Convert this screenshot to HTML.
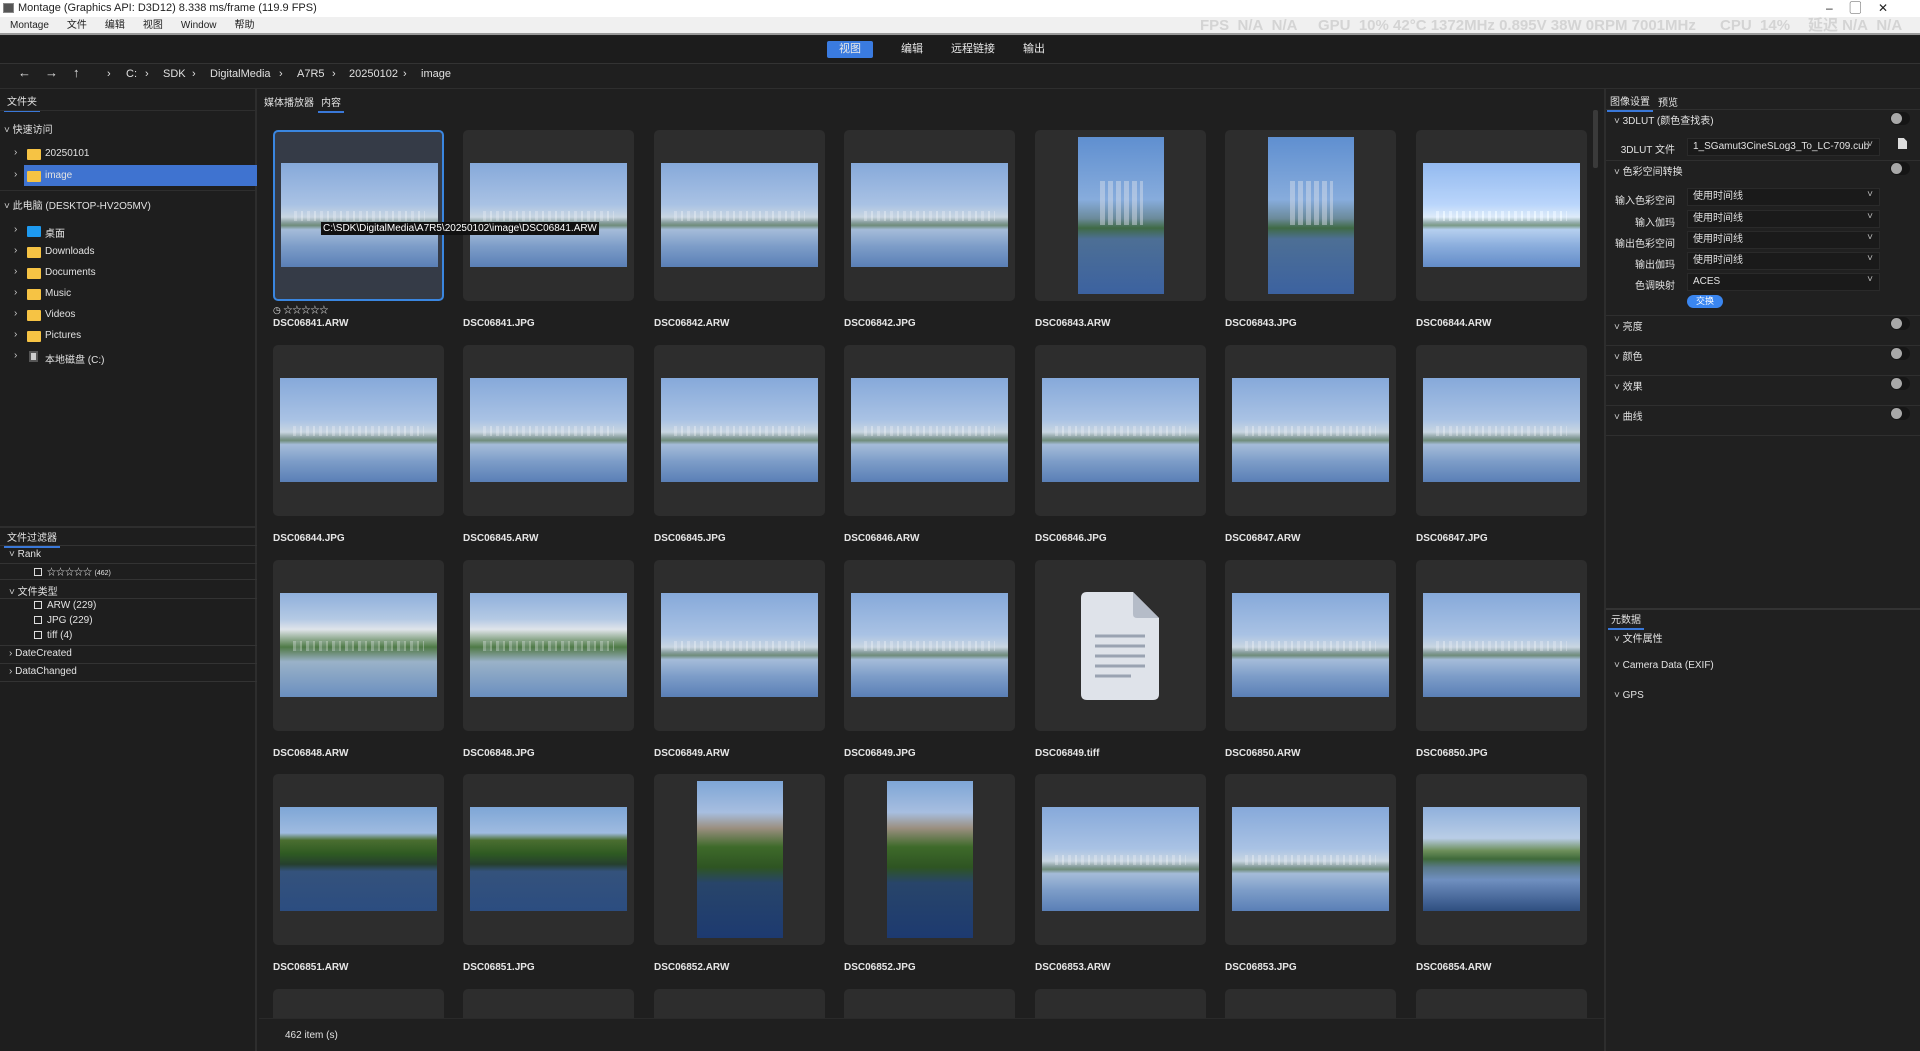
<!DOCTYPE html>
<html><head><meta charset="utf-8"><style>
*{margin:0;padding:0;box-sizing:border-box}
html,body{width:1920px;height:1051px;overflow:hidden}
body{background:#1f1f1f;font-family:"Liberation Sans","Noto Sans CJK SC",sans-serif;font-size:11px;color:#e2e2e2}
#w{position:relative;width:1920px;height:1051px;overflow:hidden}
.a{position:absolute;white-space:nowrap}
.title{left:0;top:0;width:1920px;height:17px;background:#fff;color:#222;font-size:11px;line-height:17px;padding-left:18px}
.menu{left:0;top:17px;width:1920px;height:18px;background:#f0f0f0;color:#222;font-size:10px;line-height:18px;border-bottom:2px solid #9a9a9a}
.menu span{margin-left:10px;margin-right:8px}
.gpu{position:absolute;top:0;color:#d4d4d4;font-size:15px;font-weight:bold;line-height:18px}
.top{left:0;top:36px;width:1920px;height:28px;background:#1c1c1c;border-bottom:1px solid #333}
.tab{top:41px;height:17px;line-height:17px;font-size:11px;color:#e8e8e8}
.bc{top:68px;font-size:11px;color:#e0e0e0}
.left{left:0;top:89px;width:257px;height:962px;background:#1e1e1e;border-right:2px solid #2d2d2d}
.right{left:1604px;top:89px;width:316px;height:962px;background:#202020;border-left:2px solid #2d2d2d}
.ul{border-bottom:2px solid #3a78d8}
.fold{width:14px;height:11px;background:#f6c344;border-radius:1px}
.chev{color:#ccc;font-size:10px}
.card{position:absolute;width:171px;height:171px;background:#2d2d2d;border-radius:5px}
.sel{background:#353b47;border:2px solid #3a86e0}
.im{position:absolute;left:7px;top:33px;width:157px;height:104px;background:linear-gradient(#86a9da 0%,#a9c2e4 40%,#c9d6e2 52%,#8aa0a0 57%,#6f8c7a 60%,#a5bcd9 64%,#7d9dc8 80%,#5a7fb6 100%)}
.im:after{content:"";position:absolute;left:8%;right:8%;top:46%;height:10%;background:repeating-linear-gradient(90deg,rgba(235,238,245,.35) 0 3px,rgba(200,210,225,.15) 3px 7px,rgba(255,255,255,.3) 7px 9px,transparent 9px 13px)}
.pt{left:43px;top:7px;width:86px;height:157px;background:linear-gradient(#5f8fd0 0%,#87acdc 40%,#6b8a9a 52%,#3f6a45 58%,#4d6f95 65%,#3c62a0 100%)}
.pt:after{left:25%;right:25%;top:28%;height:28%;background:repeating-linear-gradient(90deg,rgba(220,225,235,.45) 0 5px,transparent 5px 8px)}
.gr{background:linear-gradient(#7ea6d6 0%,#9fbbe0 25%,#4a6e30 32%,#2e5a22 45%,#263f2e 55%,#34527c 62%,#2c4d80 100%)}
.gr:after{display:none}
.gp{background:linear-gradient(#7ea6d6 0%,#a7bee0 20%,#9b8f80 30%,#3e6a2a 42%,#2e5422 55%,#28456a 65%,#1d3a70 100%)}
.gp:after{display:none}
.lbl{position:absolute;font-size:10px;color:#e6e6e6;font-weight:bold}
.tg{position:absolute;width:20px;height:13px;border-radius:7px;background:#151515}
.tg:before{content:"";position:absolute;left:1px;top:1px;width:11px;height:11px;border-radius:50%;background:#a8a8a8}
.dd{position:absolute;left:1687px;width:193px;height:18px;background:#1a1a1a;border:1px solid #2a2a2a;font-size:10px;line-height:16px;padding-left:5px}
.dd:after{content:"˅";position:absolute;right:6px;top:-2px;color:#bbb}
.rl{position:absolute;font-size:10px;text-align:right;width:120px;left:1555px}
.sep{position:absolute;left:1606px;width:314px;height:1px;background:#2f2f2f}
.cb{display:inline-block;width:8px;height:8px;border:1px solid #ddd;margin-right:5px;vertical-align:-1px}
.r4{height:29px;border-radius:5px 5px 0 0}
</style></head><body><div id="w">
<div class="a title">Montage (Graphics API: D3D12) 8.338 ms/frame (119.9 FPS)</div>
<div class="a" style="left:3px;top:3px;width:11px;height:10px;background:#555;border:1px solid #888"></div>
<div class="a" style="left:1826px;top:0;color:#222;font-size:12px;line-height:16px">–&nbsp;&nbsp;&nbsp;&nbsp;&nbsp;▢&nbsp;&nbsp;&nbsp;&nbsp;&nbsp;✕</div>
<div class="a menu"><span>Montage</span><span>文件</span><span>编辑</span><span>视图</span><span>Window</span><span>帮助</span>
<div class="gpu" style="left:1200px">FPS&nbsp; N/A&nbsp; N/A</div>
<div class="gpu" style="left:1318px">GPU&nbsp; 10% 42°C 1372MHz 0.895V 38W 0RPM 7001MHz</div>
<div class="gpu" style="left:1720px">CPU&nbsp; 14%</div>
<div class="gpu" style="left:1808px">延迟 N/A&nbsp; N/A</div></div>
<div class="a top"></div>
<div class="a tab" style="left:827px;width:46px;background:#3a7be0;border-radius:2px;text-align:center">视图</div>
<div class="a tab" style="left:901px">编辑</div>
<div class="a tab" style="left:951px">远程链接</div>
<div class="a tab" style="left:1023px">输出</div>
<div class="a bc" style="left:18px;font-size:13px;top:65px">←</div>
<div class="a bc" style="left:45px;font-size:13px;top:65px">→</div>
<div class="a bc" style="left:73px;font-size:13px;top:65px">↑</div>
<div class="a bc" style="left:107px">›</div><div class="a bc" style="left:126px">C:</div>
<div class="a bc" style="left:145px">›</div><div class="a bc" style="left:163px">SDK</div>
<div class="a bc" style="left:192px">›</div><div class="a bc" style="left:210px">DigitalMedia</div>
<div class="a bc" style="left:279px">›</div><div class="a bc" style="left:297px">A7R5</div>
<div class="a bc" style="left:332px">›</div><div class="a bc" style="left:349px">20250102</div>
<div class="a bc" style="left:403px">›</div><div class="a bc" style="left:421px">image</div>
<div class="a" style="left:0;top:88px;width:1920px;height:1px;background:#2e2e2e"></div>

<div class="a left"></div>
<div class="a ul" style="left:4px;top:93px;padding:0 3px 2px;font-size:10px">文件夹</div>
<div class="a" style="left:0;top:110px;width:257px;height:1px;background:#2e2e2e"></div>
<div class="a" style="left:4px;top:121px;font-size:10px"><span class="chev">˅</span> 快速访问</div>
<div class="a chev" style="left:14px;top:147px">›</div><div class="a fold" style="left:27px;top:149px"></div><div class="a" style="left:45px;top:148px;font-size:10px">20250101</div>
<div class="a" style="left:24px;top:165px;width:233px;height:21px;background:#3f73d0"></div>
<div class="a chev" style="left:14px;top:169px">›</div><div class="a fold" style="left:27px;top:171px"></div><div class="a" style="left:45px;top:170px;font-size:10px">image</div>
<div class="a" style="left:0;top:190px;width:257px;height:1px;background:#2e2e2e"></div>
<div class="a" style="left:4px;top:197px;font-size:10px"><span class="chev">˅</span> 此电脑 (DESKTOP-HV2O5MV)</div>
<div class="a chev" style="left:14px;top:224px">›</div><div class="a fold" style="left:27px;top:226px;background:#1e9af0"></div><div class="a" style="left:45px;top:225px;font-size:10px">桌面</div>
<div class="a chev" style="left:14px;top:245px">›</div><div class="a fold" style="left:27px;top:247px"></div><div class="a" style="left:45px;top:246px;font-size:10px">Downloads</div>
<div class="a chev" style="left:14px;top:266px">›</div><div class="a fold" style="left:27px;top:268px"></div><div class="a" style="left:45px;top:267px;font-size:10px">Documents</div>
<div class="a chev" style="left:14px;top:287px">›</div><div class="a fold" style="left:27px;top:289px"></div><div class="a" style="left:45px;top:288px;font-size:10px">Music</div>
<div class="a chev" style="left:14px;top:308px">›</div><div class="a fold" style="left:27px;top:310px"></div><div class="a" style="left:45px;top:309px;font-size:10px">Videos</div>
<div class="a chev" style="left:14px;top:329px">›</div><div class="a fold" style="left:27px;top:331px"></div><div class="a" style="left:45px;top:330px;font-size:10px">Pictures</div>
<div class="a chev" style="left:14px;top:350px">›</div><div class="a" style="left:29px;top:351px;width:9px;height:11px;background:#ccc;border:2px solid #555"></div><div class="a" style="left:45px;top:351px;font-size:10px">本地磁盘 (C:)</div>

<div class="a" style="left:0;top:526px;width:257px;height:2px;background:#2e2e2e"></div>
<div class="a ul" style="left:4px;top:529px;padding:0 3px 2px;font-size:10px">文件过滤器</div>
<div class="a" style="left:0;top:545px;width:257px;height:1px;background:#333"></div>
<div class="a" style="left:9px;top:549px;font-size:10px"><span class="chev">˅</span> Rank</div>
<div class="a" style="left:0;top:563px;width:257px;height:1px;background:#333"></div>
<div class="a" style="left:34px;top:565px;font-size:9px"><span class="cb"></span>☆☆☆☆☆ <span style="font-size:7px">(462)</span></div>
<div class="a" style="left:0;top:579px;width:257px;height:1px;background:#333"></div>
<div class="a" style="left:9px;top:583px;font-size:10px"><span class="chev">˅</span> 文件类型</div>
<div class="a" style="left:0;top:598px;width:257px;height:1px;background:#333"></div>
<div class="a" style="left:34px;top:600px;font-size:10px"><span class="cb"></span>ARW (229)</div>
<div class="a" style="left:34px;top:615px;font-size:10px"><span class="cb"></span>JPG (229)</div>
<div class="a" style="left:34px;top:630px;font-size:10px"><span class="cb"></span>tiff (4)</div>
<div class="a" style="left:0;top:645px;width:257px;height:1px;background:#333"></div>
<div class="a" style="left:9px;top:648px;font-size:10px"><span class="chev">›</span> DateCreated</div>
<div class="a" style="left:0;top:663px;width:257px;height:1px;background:#333"></div>
<div class="a" style="left:9px;top:666px;font-size:10px"><span class="chev">›</span> DataChanged</div>
<div class="a" style="left:0;top:681px;width:257px;height:1px;background:#333"></div>

<div class="a" style="left:264px;top:94px;font-size:10px">媒体播放器</div>
<div class="a ul" style="left:318px;top:94px;font-size:10px;padding:0 3px 2px">内容</div>
<div class="a" style="left:1593px;top:110px;width:5px;height:58px;background:#3a3a3a;border-radius:2px"></div>

<!-- row 0 -->
<div class="card sel" style="left:273px;top:130px"><div class="im" style="left:6px;top:31px"></div></div>
<div class="a" style="left:273px;top:303px;font-size:9px">◷ ☆☆☆☆☆</div>
<div class="lbl" style="left:273px;top:318px">DSC06841.ARW</div>
<div class="card" style="left:463px;top:130px"><div class="im"></div></div><div class="lbl" style="left:463px;top:318px">DSC06841.JPG</div>
<div class="card" style="left:654px;top:130px"><div class="im"></div></div><div class="lbl" style="left:654px;top:318px">DSC06842.ARW</div>
<div class="card" style="left:844px;top:130px"><div class="im"></div></div><div class="lbl" style="left:844px;top:318px">DSC06842.JPG</div>
<div class="card" style="left:1035px;top:130px"><div class="im pt"></div></div><div class="lbl" style="left:1035px;top:318px">DSC06843.ARW</div>
<div class="card" style="left:1225px;top:130px"><div class="im pt"></div></div><div class="lbl" style="left:1225px;top:318px">DSC06843.JPG</div>
<div class="card" style="left:1416px;top:130px"><div class="im" style="filter:brightness(1.1)"></div></div><div class="lbl" style="left:1416px;top:318px">DSC06844.ARW</div>
<!-- row 1 -->
<div class="card" style="left:273px;top:345px"><div class="im"></div></div><div class="lbl" style="left:273px;top:533px">DSC06844.JPG</div>
<div class="card" style="left:463px;top:345px"><div class="im"></div></div><div class="lbl" style="left:463px;top:533px">DSC06845.ARW</div>
<div class="card" style="left:654px;top:345px"><div class="im"></div></div><div class="lbl" style="left:654px;top:533px">DSC06845.JPG</div>
<div class="card" style="left:844px;top:345px"><div class="im"></div></div><div class="lbl" style="left:844px;top:533px">DSC06846.ARW</div>
<div class="card" style="left:1035px;top:345px"><div class="im"></div></div><div class="lbl" style="left:1035px;top:533px">DSC06846.JPG</div>
<div class="card" style="left:1225px;top:345px"><div class="im"></div></div><div class="lbl" style="left:1225px;top:533px">DSC06847.ARW</div>
<div class="card" style="left:1416px;top:345px"><div class="im"></div></div><div class="lbl" style="left:1416px;top:533px">DSC06847.JPG</div>
<!-- row 2 -->
<div class="card" style="left:273px;top:560px"><div class="im" style="background:linear-gradient(#8fb0dc 0%,#b4c9e4 25%,#dfe4ea 35%,#4e7a46 52%,#6f8f7a 58%,#9ab2c8 66%,#6a8fbf 100%)"></div></div><div class="lbl" style="left:273px;top:748px">DSC06848.ARW</div>
<div class="card" style="left:463px;top:560px"><div class="im" style="background:linear-gradient(#8fb0dc 0%,#b4c9e4 25%,#dfe4ea 35%,#4e7a46 52%,#6f8f7a 58%,#9ab2c8 66%,#6a8fbf 100%)"></div></div><div class="lbl" style="left:463px;top:748px">DSC06848.JPG</div>
<div class="card" style="left:654px;top:560px"><div class="im"></div></div><div class="lbl" style="left:654px;top:748px">DSC06849.ARW</div>
<div class="card" style="left:844px;top:560px"><div class="im"></div></div><div class="lbl" style="left:844px;top:748px">DSC06849.JPG</div>
<div class="card" style="left:1035px;top:560px">
<svg style="position:absolute;left:46px;top:32px" width="78" height="108" viewBox="0 0 78 108"><path d="M6 0H52L78 26V102Q78 108 72 108H6Q0 108 0 102V6Q0 0 6 0Z" fill="#dfe3ea"/><path d="M52 0V22Q52 26 56 26H78Z" fill="#b5bcc8"/><g stroke="#9aa3b2" stroke-width="3"><path d="M14 44H64M14 54H64M14 64H64M14 74H64M14 84H50"/></g></svg></div><div class="lbl" style="left:1035px;top:748px">DSC06849.tiff</div>
<div class="card" style="left:1225px;top:560px"><div class="im"></div></div><div class="lbl" style="left:1225px;top:748px">DSC06850.ARW</div>
<div class="card" style="left:1416px;top:560px"><div class="im"></div></div><div class="lbl" style="left:1416px;top:748px">DSC06850.JPG</div>
<!-- row 3 -->
<div class="card" style="left:273px;top:774px"><div class="im gr"></div></div><div class="lbl" style="left:273px;top:962px">DSC06851.ARW</div>
<div class="card" style="left:463px;top:774px"><div class="im gr"></div></div><div class="lbl" style="left:463px;top:962px">DSC06851.JPG</div>
<div class="card" style="left:654px;top:774px"><div class="im pt gp"></div></div><div class="lbl" style="left:654px;top:962px">DSC06852.ARW</div>
<div class="card" style="left:844px;top:774px"><div class="im pt gp"></div></div><div class="lbl" style="left:844px;top:962px">DSC06852.JPG</div>
<div class="card" style="left:1035px;top:774px"><div class="im"></div></div><div class="lbl" style="left:1035px;top:962px">DSC06853.ARW</div>
<div class="card" style="left:1225px;top:774px"><div class="im"></div></div><div class="lbl" style="left:1225px;top:962px">DSC06853.JPG</div>
<div class="card" style="left:1416px;top:774px"><div class="im gr" style="background:linear-gradient(#8fb0dc 0%,#b9cde6 30%,#6d8f5a 42%,#3f6a3a 50%,#5a7a8a 58%,#6f8fc0 70%,#2f4f80 100%)"></div></div><div class="lbl" style="left:1416px;top:962px">DSC06854.ARW</div>
<!-- row 4 partial -->
<div class="card r4" style="left:273px;top:989px"></div><div class="card r4" style="left:463px;top:989px"></div><div class="card r4" style="left:654px;top:989px"></div><div class="card r4" style="left:844px;top:989px"></div><div class="card r4" style="left:1035px;top:989px"></div><div class="card r4" style="left:1225px;top:989px"></div><div class="card r4" style="left:1416px;top:989px"></div>
<div class="a" style="left:259px;top:1018px;width:1345px;height:33px;background:#1f1f1f;border-top:1px solid #2a2a2a"></div>
<div class="a" style="left:285px;top:1030px;font-size:10px">462 item (s)</div>
<div class="a" style="left:321px;top:222px;background:#111;color:#fff;font-size:10px;padding:0 2px;line-height:13px;z-index:5">C:\SDK\DigitalMedia\A7R5\20250102\image\DSC06841.ARW</div>

<!-- right panel -->
<div class="a right"></div>
<div class="a ul" style="left:1607px;top:93px;font-size:10px;padding:0 3px 2px">图像设置</div>
<div class="a" style="left:1658px;top:94px;font-size:10px">预览</div>
<div class="sep" style="top:109px"></div>
<div class="a" style="left:1614px;top:112px;font-size:10px"><span class="chev">˅</span> 3DLUT (颜色查找表)</div>
<div class="tg" style="left:1890px;top:112px"></div>
<div class="rl" style="top:141px">3DLUT 文件</div>
<div class="dd" style="top:138px">1_SGamut3CineSLog3_To_LC-709.cub</div>
<div class="a" style="left:1898px;top:138px;width:9px;height:11px;background:#ddd;clip-path:polygon(0 0,65% 0,100% 30%,100% 100%,0 100%)"></div>
<div class="sep" style="top:160px"></div>
<div class="a" style="left:1614px;top:163px;font-size:10px"><span class="chev">˅</span> 色彩空间转换</div>
<div class="tg" style="left:1890px;top:162px"></div>
<div class="rl" style="top:192px">输入色彩空间</div><div class="dd" style="top:188px">使用时间线</div>
<div class="rl" style="top:214px">输入伽玛</div><div class="dd" style="top:210px">使用时间线</div>
<div class="rl" style="top:235px">输出色彩空间</div><div class="dd" style="top:231px">使用时间线</div>
<div class="rl" style="top:256px">输出伽玛</div><div class="dd" style="top:252px">使用时间线</div>
<div class="rl" style="top:277px">色调映射</div><div class="dd" style="top:273px">ACES</div>
<div class="a" style="left:1687px;top:295px;width:36px;height:13px;border-radius:7px;background:#3a86f0;color:#fff;font-size:9px;text-align:center;line-height:13px">交换</div>
<div class="sep" style="top:315px"></div>
<div class="a" style="left:1614px;top:318px;font-size:10px"><span class="chev">˅</span> 亮度</div><div class="tg" style="left:1890px;top:317px"></div>
<div class="sep" style="top:345px"></div>
<div class="a" style="left:1614px;top:348px;font-size:10px"><span class="chev">˅</span> 颜色</div><div class="tg" style="left:1890px;top:347px"></div>
<div class="sep" style="top:375px"></div>
<div class="a" style="left:1614px;top:378px;font-size:10px"><span class="chev">˅</span> 效果</div><div class="tg" style="left:1890px;top:377px"></div>
<div class="sep" style="top:405px"></div>
<div class="a" style="left:1614px;top:408px;font-size:10px"><span class="chev">˅</span> 曲线</div><div class="tg" style="left:1890px;top:407px"></div>
<div class="sep" style="top:435px"></div>
<div class="sep" style="top:608px;height:2px;background:#333"></div>
<div class="a ul" style="left:1608px;top:611px;font-size:10px;padding:0 3px 2px">元数据</div>
<div class="a" style="left:1614px;top:630px;font-size:10px"><span class="chev">˅</span> 文件属性</div>
<div class="a" style="left:1614px;top:660px;font-size:10px"><span class="chev">˅</span> Camera Data (EXIF)</div>
<div class="a" style="left:1614px;top:690px;font-size:10px"><span class="chev">˅</span> GPS</div>
</div></body></html>
